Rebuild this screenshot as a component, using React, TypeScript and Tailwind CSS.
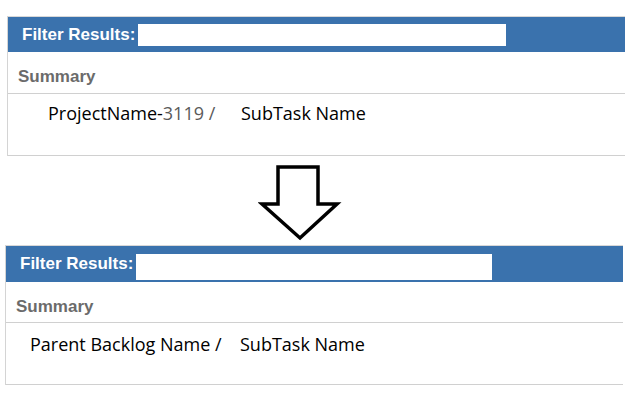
function FilterPanel({
  className, inputClass, headerClass, summaryClass, rowClass, children,
}: {
  className: string
  inputClass: string
  headerClass: string
  summaryClass: string
  rowClass: string
  children: React.ReactNode
}) {
  return (
    <div className={`w-[618px] border-l border-[#d4d4d4] ${className}`}>
      <div className={`flex items-center bg-[#3a72ad] border-t border-[#d8d8d8] ${headerClass}`}>
        <span className="pl-[14px] text-[17px] font-bold text-white font-['Liberation_Sans',Arial,sans-serif] whitespace-nowrap">
          Filter Results:
        </span>
        <div className={`bg-white ${inputClass}`} />
      </div>
      <div className={`flex items-center pl-[10px] border-b border-[#d0d0d0] ${summaryClass}`}>
        <span className="text-[17px] font-bold text-[#6b6b6b] font-['Liberation_Sans',Arial,sans-serif]">Summary</span>
      </div>
      <div className={`border-b border-[#d0d0d0] font-['Open_Sans','Noto_Sans',sans-serif] text-[18px] text-black ${rowClass}`}>
        {children}
      </div>
    </div>
  );
}

function DownArrow() {
  return (
    <svg width="84" height="80" viewBox="0 0 84 80" className="ml-[258px] mt-[7px]">
      <path
        d="M20 4 H60 V41 H79 L42 75 L4 41 H20 Z"
        fill="white"
        stroke="black"
        strokeWidth="3.5"
        strokeLinejoin="miter"
      />
    </svg>
  );
}

export default function App() {
  return (
    <div className="w-[640px] h-[400px] bg-white overflow-hidden">
      <FilterPanel
        className="ml-[7px] mt-[16px]"
        headerClass="h-[36px]"
        inputClass="ml-[3px] w-[368px] h-[22px]"
        summaryClass="h-[42px] pt-[9px]"
        rowClass="h-[62px] pt-[6px]"
      >
        <div className="flex items-center">
          <span className="ml-[40px] w-[193px] whitespace-nowrap">
            ProjectName-
            <span className="text-[#5a5a5a]">3119 /</span>
          </span>
          <span>SubTask Name</span>
        </div>
      </FilterPanel>
      <DownArrow />
      <FilterPanel
        className="ml-[5px] mt-[2px]"
        headerClass="h-[37px]"
        inputClass="ml-[3px] w-[356px] h-[26px] self-end mb-[2px]"
        summaryClass="h-[41px] pt-[9px]"
        rowClass="h-[62px] pt-[8px]"
      >
        <div className="flex items-center">
          <span className="ml-[24px] w-[210px] whitespace-nowrap">Parent Backlog Name /</span>
          <span>SubTask Name</span>
        </div>
      </FilterPanel>
    </div>
  );
}
